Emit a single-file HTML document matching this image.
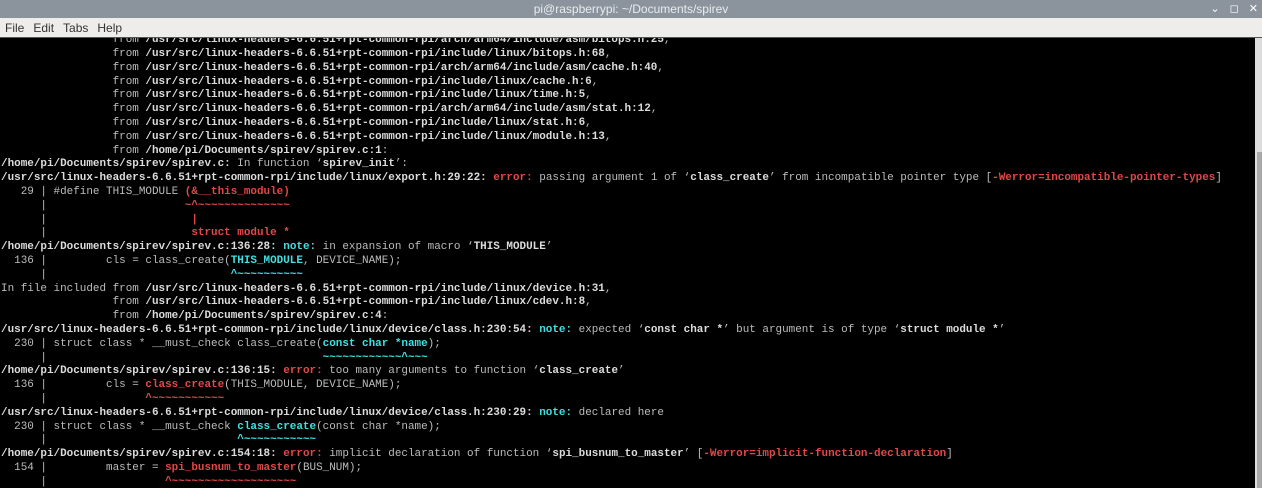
<!DOCTYPE html>
<html><head><meta charset="utf-8"><style>
html,body{margin:0;padding:0;width:1262px;height:488px;overflow:hidden;background:#000;}
#title{position:absolute;left:0;top:0;width:1262px;height:18px;background:#8b949d;color:#e8ecef;font:12px "Liberation Sans",sans-serif;text-align:center;line-height:18px;}
#ctl{position:absolute;right:0;top:0;height:18px;font:11px "DejaVu Sans",sans-serif;color:#fff;line-height:18px;}
#menu{position:absolute;left:0;top:18px;width:1262px;height:19px;background:#eeedeb;border-bottom:1px solid #555;font:12px "Liberation Sans",sans-serif;color:#333;line-height:20px;}
#menu span{margin-left:5px;margin-right:4px;}
#term{position:absolute;left:0;top:38px;width:1255px;height:450px;overflow:hidden;background:#000;}
pre{position:absolute;left:1px;top:-3.8px;margin:0;font-family:"Liberation Mono",monospace;font-size:10.95px;line-height:13.8px;color:#bdbdbd;white-space:pre;}
b{color:#dcdcdc;}
.r{color:#e04848;font-weight:bold;}
.c{color:#3fe0e0;font-weight:bold;}
#sb{position:absolute;left:1255px;top:38px;width:7px;height:450px;background:#dcdcdc;}
#th{position:absolute;left:1257px;top:152px;width:5px;height:336px;background:#a9a9a9;}
</style></head><body>
<div id="title">pi@raspberrypi: ~/Documents/spirev</div>
<div id="ctl"><span style="margin-right:10px">&#8964;</span><span style="margin-right:10px">&#9723;</span><span style="margin-right:4px">&#10005;</span></div>
<div id="menu"><span>File</span><span>Edit</span><span>Tabs</span><span>Help</span></div>
<div id="term"><pre>                 from <b>/usr/src/linux-headers-6.6.51+rpt-common-rpi/arch/arm64/include/asm/bitops.h:25</b>,
                 from <b>/usr/src/linux-headers-6.6.51+rpt-common-rpi/include/linux/bitops.h:68</b>,
                 from <b>/usr/src/linux-headers-6.6.51+rpt-common-rpi/arch/arm64/include/asm/cache.h:40</b>,
                 from <b>/usr/src/linux-headers-6.6.51+rpt-common-rpi/include/linux/cache.h:6</b>,
                 from <b>/usr/src/linux-headers-6.6.51+rpt-common-rpi/include/linux/time.h:5</b>,
                 from <b>/usr/src/linux-headers-6.6.51+rpt-common-rpi/arch/arm64/include/asm/stat.h:12</b>,
                 from <b>/usr/src/linux-headers-6.6.51+rpt-common-rpi/include/linux/stat.h:6</b>,
                 from <b>/usr/src/linux-headers-6.6.51+rpt-common-rpi/include/linux/module.h:13</b>,
                 from <b>/home/pi/Documents/spirev/spirev.c:1</b>:
<b>/home/pi/Documents/spirev/spirev.c:</b> In function ‘<b>spirev_init</b>’:
<b>/usr/src/linux-headers-6.6.51+rpt-common-rpi/include/linux/export.h:29:22:</b> <span class="r">error:</span> passing argument 1 of ‘<b>class_create</b>’ from incompatible pointer type [<span class="r">-Werror=incompatible-pointer-types</span>]
   29 | #define THIS_MODULE <span class="r">(&amp;__this_module)</span>
      |                     <span class="r">~^~~~~~~~~~~~~~~</span>
      |                      <span class="r">|</span>
      |                      <span class="r">struct module *</span>
<b>/home/pi/Documents/spirev/spirev.c:136:28:</b> <span class="c">note:</span> in expansion of macro ‘<b>THIS_MODULE</b>’
  136 |         cls = class_create(<span class="c">THIS_MODULE</span>, DEVICE_NAME);
      |                            <span class="c">^~~~~~~~~~~</span>
In file included from <b>/usr/src/linux-headers-6.6.51+rpt-common-rpi/include/linux/device.h:31</b>,
                 from <b>/usr/src/linux-headers-6.6.51+rpt-common-rpi/include/linux/cdev.h:8</b>,
                 from <b>/home/pi/Documents/spirev/spirev.c:4</b>:
<b>/usr/src/linux-headers-6.6.51+rpt-common-rpi/include/linux/device/class.h:230:54:</b> <span class="c">note:</span> expected ‘<b>const char *</b>’ but argument is of type ‘<b>struct module *</b>’
  230 | struct class * __must_check class_create(<span class="c">const char *name</span>);
      |                                          <span class="c">~~~~~~~~~~~~^~~~</span>
<b>/home/pi/Documents/spirev/spirev.c:136:15:</b> <span class="r">error:</span> too many arguments to function ‘<b>class_create</b>’
  136 |         cls = <span class="r">class_create</span>(THIS_MODULE, DEVICE_NAME);
      |               <span class="r">^~~~~~~~~~~~</span>
<b>/usr/src/linux-headers-6.6.51+rpt-common-rpi/include/linux/device/class.h:230:29:</b> <span class="c">note:</span> declared here
  230 | struct class * __must_check <span class="c">class_create</span>(const char *name);
      |                             <span class="c">^~~~~~~~~~~~</span>
<b>/home/pi/Documents/spirev/spirev.c:154:18:</b> <span class="r">error:</span> implicit declaration of function ‘<b>spi_busnum_to_master</b>’ [<span class="r">-Werror=implicit-function-declaration</span>]
  154 |         master = <span class="r">spi_busnum_to_master</span>(BUS_NUM);
      |                  <span class="r">^~~~~~~~~~~~~~~~~~~~</span>
</pre></div>
<div id="sb"></div><div id="th"></div>
</body></html>
